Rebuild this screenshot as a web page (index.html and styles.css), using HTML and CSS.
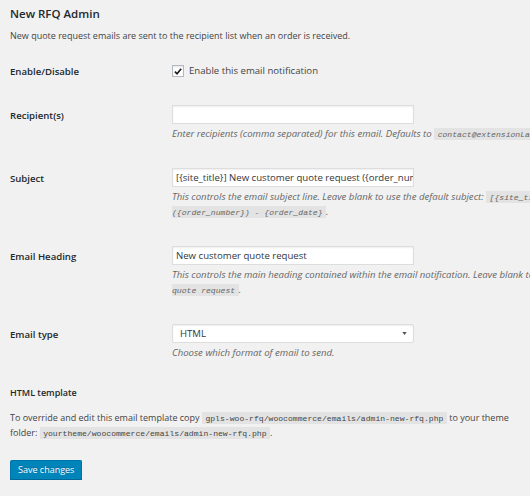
FILE: index.html
```html
<!DOCTYPE html>
<html>
<head>
<meta charset="utf-8">
<link rel="stylesheet" href="styles.css">
</head>
<body>
<div class="page">
  <h2 class="title">New RFQ Admin</h2>
  <p class="intro">New quote request emails are sent to the recipient list when an order is received.</p>

  <div class="form-table">
    <div class="row row-check">
      <div class="label">Enable/Disable</div>
      <div class="field">
        <div class="check-line">
          <span class="checkbox"><svg viewBox="0 0 12 12" width="11" height="11"><path d="M2.3 6.2 L4.8 8.7 L9.8 2.6" fill="none" stroke="#1d1d1d" stroke-width="2"/></svg></span>
          <span>Enable this email notification</span>
        </div>
      </div>
    </div>

    <div class="row">
      <div class="label">Recipient(s)</div>
      <div class="field">
        <div class="input"></div>
        <p class="desc">Enter recipients (comma separated) for this email. Defaults to <code>contact@extensionLabs.com</code>.</p>
      </div>
    </div>

    <div class="row">
      <div class="label">Subject</div>
      <div class="field">
        <div class="input"><span class="input-text">[{site_title}] New customer quote request ({order_number}) - {order_date}</span></div>
        <p class="desc">This controls the email subject line. Leave blank to use the default subject: <code>[{site_title}] New customer quote request ({order_number}) - {order_date}</code>.</p>
      </div>
    </div>

    <div class="row">
      <div class="label">Email Heading</div>
      <div class="field">
        <div class="input"><span class="input-text">New customer quote request</span></div>
        <p class="desc">This controls the main heading contained within the email notification. Leave blank to use the default heading: <code>New customer quote request</code>.</p>
      </div>
    </div>

    <div class="row">
      <div class="label">Email type</div>
      <div class="field">
        <div class="input select"><span class="input-text">HTML</span><svg class="caret" viewBox="0 0 6 4" width="5" height="3"><path d="M0 0 H6 L3 4 Z" fill="#555"/></svg></div>
        <p class="desc">Choose which format of email to send.</p>
      </div>
    </div>
  </div>

  <h3 class="sub">HTML template</h3>
  <p class="template">To override and edit this email template copy <code>gpls-woo-rfq/woocommerce/emails/admin-new-rfq.php</code> to your theme folder: <code>yourtheme/woocommerce/emails/admin-new-rfq.php</code>.</p>

  <div class="actions">
    <button class="button-primary" type="button">Save changes</button>
  </div>
</div>
</body>
</html>
```

FILE: styles.css
```css
html, body {
  margin: 0;
  padding: 0;
  overflow: hidden;
  background: #f1f1f1;
}

body {
  font-family: "Open Sans", "Liberation Sans", sans-serif;
  font-size: 9px;
  color: #444;
}

.page {
  width: 520px;
  padding: 0 0 0 10px;
}

.title {
  margin: 0;
  padding-top: 6px;
  font-size: 11.5px;
  font-weight: 600;
  color: #23282d;
  line-height: 16px;
}

.intro {
  margin: 6px 0 0;
  line-height: 15px;
}

.form-table {
  width: 760px;
  margin-top: 7px;
}

.row {
  display: grid;
  grid-template-columns: 162px 548px;
  padding: 13px 0;
}

.label {
  font-size: 9.6px;
  font-weight: 600;
  color: #23282d;
  line-height: 13px;
  padding-top: 4px;
}

.row-check .label {
  padding-top: 2px;
}

.check-line {
  display: flex;
  align-items: center;
  gap: 5px;
  height: 16px;
  font-size: 9.6px;
  line-height: 16px;
}

.checkbox {
  box-sizing: border-box;
  width: 12px;
  height: 12px;
  border: 1px solid #b4b9be;
  background: #fff;
  box-shadow: inset 0 1px 2px rgba(0,0,0,.1);
  display: flex;
  align-items: center;
  justify-content: center;
}

.input {
  box-sizing: border-box;
  width: 242px;
  height: 19px;
  background: #fff;
  border: 1px solid #ddd;
  box-shadow: inset 0 1px 2px rgba(0,0,0,.07);
  color: #32373c;
  display: flex;
  align-items: center;
  padding: 0 3px;
  overflow: hidden;
  white-space: nowrap;
}

.input-text {
  font-size: 9.6px;
  line-height: 17px;
}

.select {
  justify-content: space-between;
  padding: 0 6px 0 7px;
  border-radius: 2px;
}

.caret {
  display: block;
}

.desc {
  margin: 2px 0 0;
  font-size: 9.6px;
  font-style: italic;
  color: #666;
  line-height: 15.5px;
}

code {
  font-family: "Liberation Mono", "DejaVu Sans Mono", monospace;
  font-size: 8.1px;
  line-height: 1;
  background: #e3e3e3;
  padding: 2px 3.5px 1px;
}

.sub {
  margin: 12px 0 0;
  font-size: 9px;
  font-weight: 600;
  color: #23282d;
  line-height: 15px;
}

.template {
  margin: 10px 0 0;
  width: 515px;
  line-height: 15px;
}

.actions {
  margin-top: 20px;
}

.button-primary {
  box-sizing: border-box;
  display: block;
  height: 20px;
  padding: 0 7px;
  font-family: "Open Sans", "Liberation Sans", sans-serif;
  font-size: 9px;
  color: #fff;
  background: #0085ba;
  border: 1px solid #0073aa;
  border-bottom-color: #006799;
  border-radius: 2px;
  box-shadow: 0 1px 0 #006799;
  text-shadow: 0 -1px 1px #006799;
  line-height: 18px;
}
```
